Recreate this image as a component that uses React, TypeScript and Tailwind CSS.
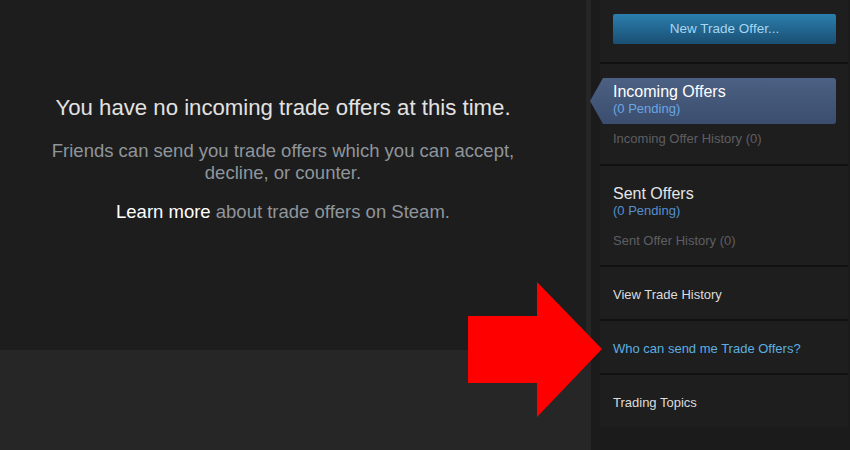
const sans = { fontFamily: '"Liberation Sans", Arial, sans-serif' }

function SideLink({ label, tone = 'text-[#dcdcdc]', last = false }: { label: string; tone?: string; last?: boolean }) {
  return (
    <div className={`pl-[13px] pt-[20px] ${last ? 'pb-[16px]' : 'pb-[16px] border-b-2 border-[#111111]'}`}>
      <a className={`block text-[13px] leading-[16px] ${tone}`}>{label}</a>
    </div>
  )
}

export default function App() {
  return (
    <div className="relative w-[850px] h-[450px] overflow-hidden bg-[#262626] flex" style={sans}>
      {/* main panel */}
      <div className="w-[586px] h-[350px] bg-[#1d1d1d] flex flex-col items-center pt-[95px] pr-[20px] text-center">
        <h2 className="text-[22.2px] leading-[26px] text-[#e2e2e2]">You have no incoming trade offers at this time.</h2>
        <p className="mt-[19px] text-[18.5px] leading-[22px] text-[#8f959b] w-[480px]">
          Friends can send you trade offers which you can accept, decline, or counter.
        </p>
        <p className="mt-[17px] text-[18.5px] leading-[22px] text-[#8f959b]">
          <a className="text-white">Learn more</a> about trade offers on Steam.
        </p>
      </div>

      {/* right column */}
      <div className="ml-[5px] w-[259px] h-full bg-[#1b1b1b] pl-[9px] pr-[2px]">
        <div className="bg-[#1e1e1e]">
          <div className="pl-[13px] pr-[12px] pt-[14px] pb-[18px] border-b-2 border-[#111111]">
            <button className="w-full h-[30px] rounded-[2px] bg-gradient-to-b from-[#2b7fae] to-[#1a4f73] text-[13.5px] text-[#a6d6f2]">
              New Trade Offer...
            </button>
          </div>

          <div className="pt-[14px] pb-[17px] pr-[12px] border-b-2 border-[#111111]">
            <div className="flex h-[46px] -ml-[10px]">
              <svg width="13" height="46" viewBox="0 0 13 46" className="shrink-0">
                <defs>
                  <linearGradient id="sel" x1="0" y1="0" x2="0" y2="1">
                    <stop offset="0" stopColor="#4c6083" />
                    <stop offset="1" stopColor="#3b4e6f" />
                  </linearGradient>
                </defs>
                <polygon points="13,0 0,23 13,46" fill="url(#sel)" />
              </svg>
              <div className="flex-1 rounded-r-[3px] bg-gradient-to-b from-[#4c6083] to-[#3b4e6f] pt-[5px] pl-[10px]">
                <div className="text-[16px] leading-[18px] text-white">Incoming Offers</div>
                <div className="text-[13px] leading-[16px] text-[#6aa6e2]">(0 Pending)</div>
              </div>
            </div>
            <div className="pl-[13px] mt-[7px] text-[13px] leading-[16px] text-[#5e5f62]">Incoming Offer History (0)</div>
          </div>

          <div className="pl-[13px] pt-[19px] pb-[16px] border-b-2 border-[#111111]">
            <div className="text-[16px] leading-[18px] text-[#e6e6e6]">Sent Offers</div>
            <div className="text-[13px] leading-[16px] text-[#5590cf]">(0 Pending)</div>
            <div className="mt-[14px] text-[13px] leading-[16px] text-[#5e5f62]">Sent Offer History (0)</div>
          </div>

          <SideLink label="View Trade History" />
          <SideLink label="Who can send me Trade Offers?" tone="text-[#5caee0]" />
          <SideLink label="Trading Topics" last />
        </div>
      </div>

      {/* red pointer arrow over the page */}
      <svg className="absolute left-0 top-0 pointer-events-none" width="850" height="450">
        <polygon points="468,316 537,316 537,282 602,349 537,417 537,383 468,383" fill="#ff0000" />
      </svg>
    </div>
  )
}
